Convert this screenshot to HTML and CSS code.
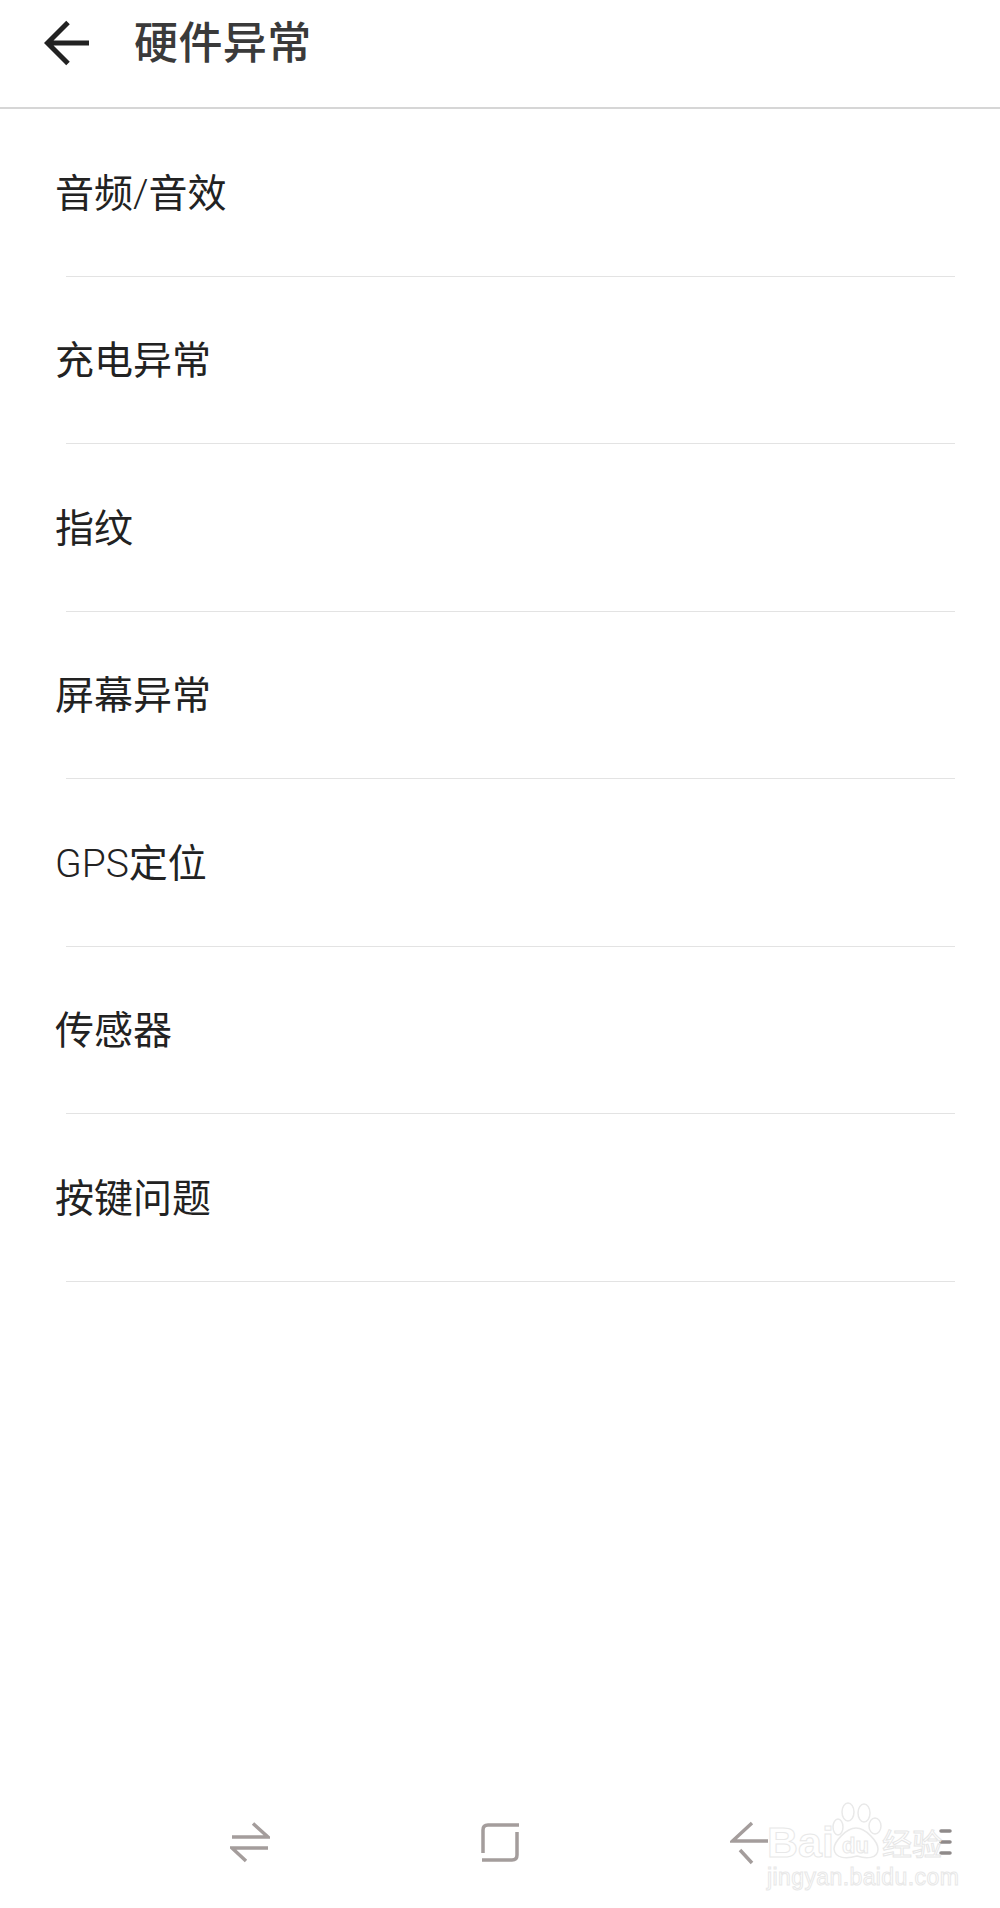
FILE: index.html
```html
<!DOCTYPE html>
<html lang="zh-CN">
<head>
<meta charset="utf-8">
<title>硬件异常</title>
<link rel="stylesheet" href="styles.css">
</head>
<body>
<div class="page">
  <header class="topbar">
    <svg class="back" width="46" height="46" viewBox="0 0 46 46"><path d="M24 2.500 L3.500 23 L24 43.500 M3.500 23 H45" fill="none" stroke="#222" stroke-width="5"/></svg>
    <h1 class="title">硬件异常</h1>
  </header>
  <ul class="list">
    <li class="row"><span class="label">音频<span class="latin">/</span>音效</span></li>
    <li class="row"><span class="label">充电异常</span></li>
    <li class="row"><span class="label">指纹</span></li>
    <li class="row"><span class="label">屏幕异常</span></li>
    <li class="row"><span class="label"><span class="latin">GPS</span>定位</span></li>
    <li class="row"><span class="label">传感器</span></li>
    <li class="row"><span class="label">按键问题</span></li>
  </ul>
  <nav class="navbar">
    <svg class="nav-icon" width="40" height="42" viewBox="0 0 40 42"><path d="M2 16 H38 L23 2.500 M38 27 H2 L16 40" fill="none" stroke="#a49d9c" stroke-width="3.500"/></svg>
    <svg class="nav-icon" width="40" height="42" viewBox="0 0 40 42"><path d="M39 4 H8 Q3 4 3 9 V32 M2 39 H32 Q37 39 37 34 V11" fill="none" stroke="#a49d9c" stroke-width="3.500"/></svg>
    <svg class="nav-icon" width="40" height="44" viewBox="0 0 40 44"><path d="M22 2 L2.500 20 H38 M10 29 L22 42" fill="none" stroke="#a49d9c" stroke-width="3.500"/></svg>
    <svg class="nav-menu" width="14" height="28" viewBox="0 0 14 28"><path d="M3 2 H12 M3 13 H12 M3 24 H12" fill="none" stroke="#8f8a8a" stroke-width="3.500" stroke-linecap="round"/></svg>
  </nav>
  <div class="watermark">
    <svg class="paw" width="50" height="58" viewBox="0 0 50 58"><g fill="#fff" stroke="#e9e9e9" stroke-width="1.500"><ellipse cx="16" cy="10" rx="6" ry="9"/><ellipse cx="32" cy="11" rx="6" ry="9"/><ellipse cx="6" cy="25" rx="5" ry="8"/><ellipse cx="43" cy="24" rx="6" ry="8"/><path d="M24 26 C34 26 46 40 46 47 C46 57 34 57 25 54 C15 57 3 57 2 47 C2 40 14 26 24 26 Z"/></g></svg>
    <span class="wm-bai">Bai</span>
    <span class="wm-du">du</span>
    <span class="wm-cn">经验</span>
    <span class="wm-url">jingyan.baidu.com</span>
  </div>
</div>
</body>
</html>
```
FILE: styles.css
```css
* { box-sizing: border-box; }
html, body { margin: 0; padding: 0; background: #fff; }
body { font-family: Roboto, "Noto Sans CJK SC", sans-serif; }
.page { position: relative; width: 1000px; height: 1908px; display: flex; flex-direction: column; overflow: hidden; }
.topbar { height: 109px; flex: none; display: flex; align-items: flex-start; padding: 20px 0 0 44px; border-bottom: 2px solid #d6d6d6; }
.back { flex: none; }
.title { margin: -4px 0 0 44px; font-size: 44px; line-height: 56px; font-weight: 500; letter-spacing: .4px; color: #3a3a3a; }
.list { list-style: none; margin: 0; padding: 0; flex: 1; }
.row { height: 167.5px; padding-left: 55px; display: flex; align-items: center; position: relative; }
.row::after { content: ""; position: absolute; left: 66px; right: 45px; bottom: 0; height: 1px; background: #e3e3e3; }
.label { font-size: 39px; line-height: 50px; font-weight: 400; color: #222; position: relative; top: 1px; }
.latin { font-weight: 300; }
.navbar { flex: none; height: 128px; display: flex; align-items: flex-start; gap: 210px; padding: 41px 0 0 230px; }
.nav-menu { margin: 8px 0 0 -42px; }
.watermark { position: absolute; left: 766px; top: 1800px; width: 234px; height: 108px; color: transparent; -webkit-text-stroke: 1px #e8e8e8; }
.paw { position: absolute; left: 66px; top: 2px; }
.wm-bai { position: absolute; left: 1px; top: 18px; font: 700 43px/48px "Liberation Sans", sans-serif; }
.wm-du { position: absolute; left: 76px; top: 32px; font: 700 22px/28px "Liberation Sans", sans-serif; }
.wm-cn { position: absolute; left: 116px; top: 20px; font: 400 30px/44px "Noto Sans CJK SC", sans-serif; -webkit-text-stroke: 1px #e6e6e6; white-space: nowrap; }
.wm-url { position: absolute; left: 1px; top: 62px; font: 400 23px/30px "Liberation Sans", sans-serif; letter-spacing: .4px; white-space: nowrap; }
```
